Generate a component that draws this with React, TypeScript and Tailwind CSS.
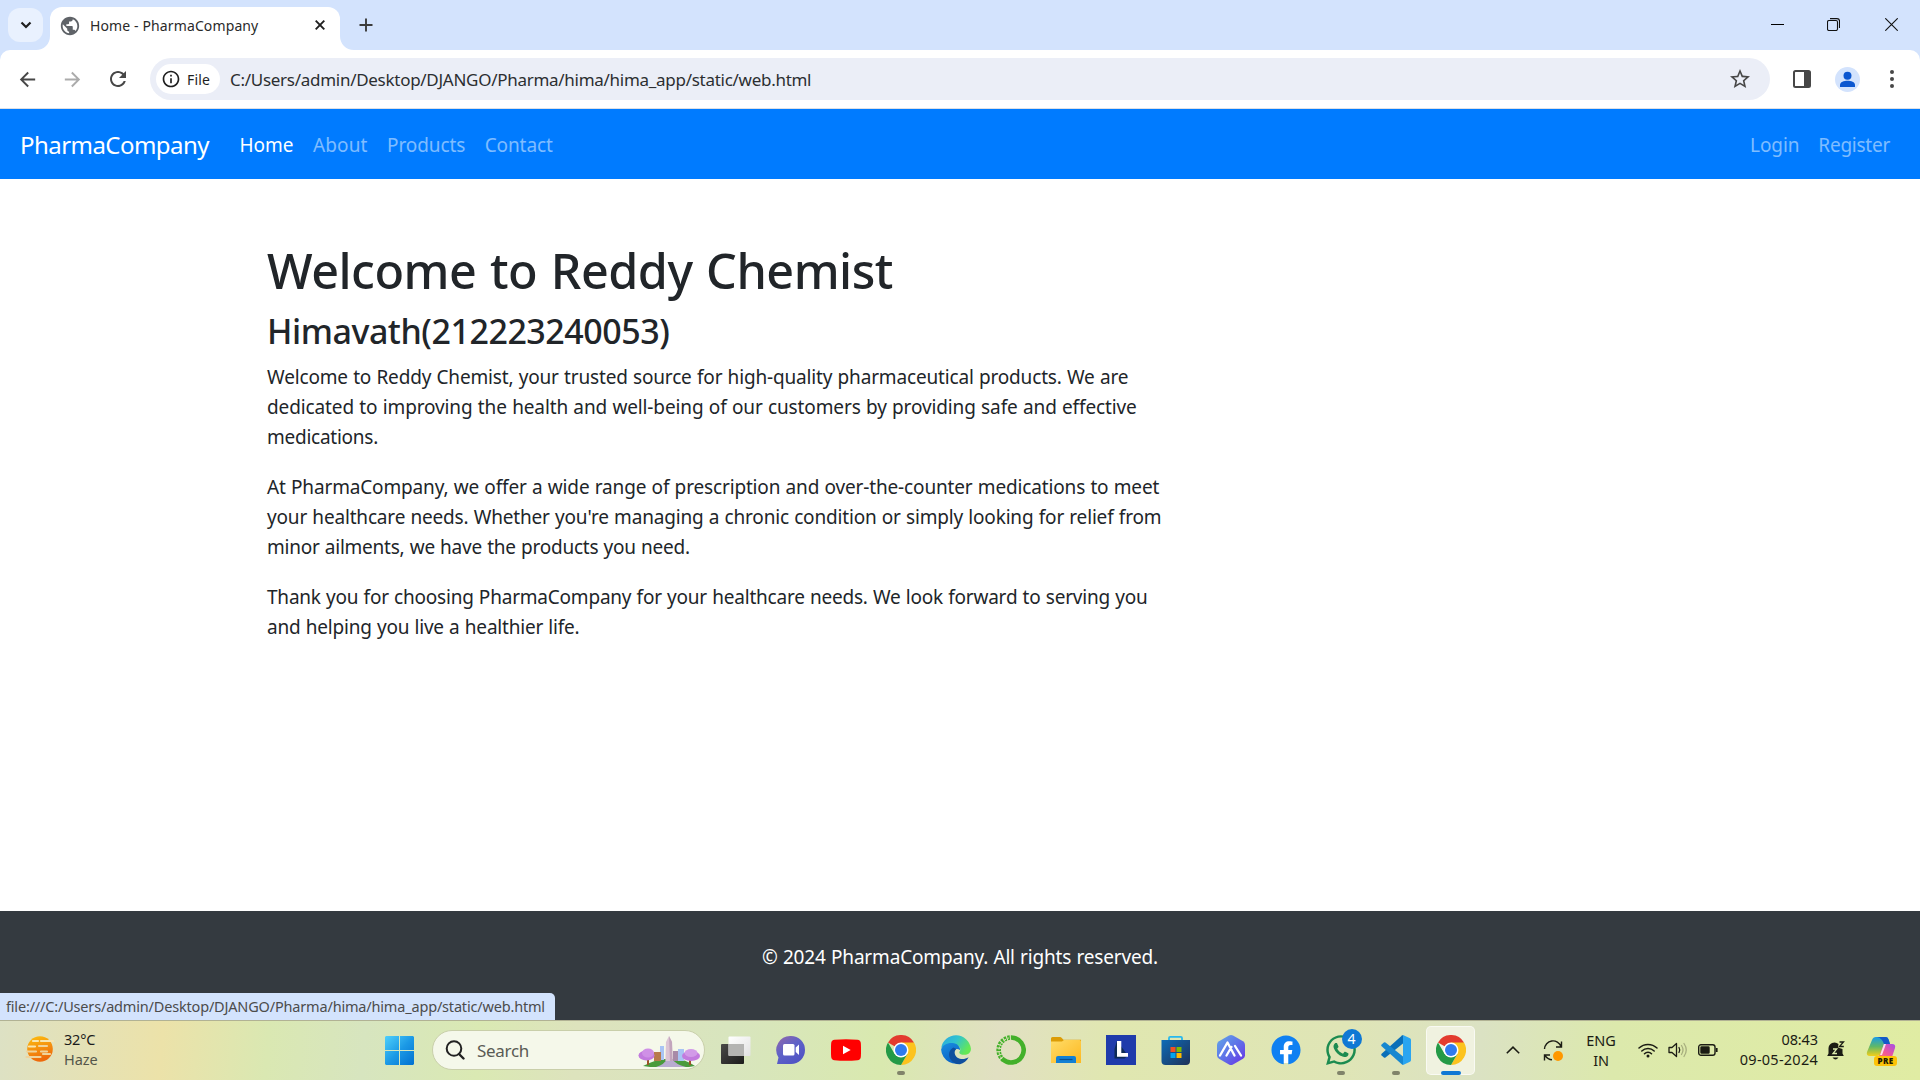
import React from 'react';
import { FaFacebook, FaWhatsapp } from 'react-icons/fa';

type IconProps = { d: string; className: string };

function Glyph({ d, className }: IconProps) {
  return (
    <svg viewBox="0 0 24 24" fill="currentColor" className={className}>
      <path d={d} />
    </svg>
  );
}

const GLOBE =
  'M12 2C6.48 2 2 6.48 2 12s4.48 10 10 10 10-4.48 10-10S17.52 2 12 2zm-1 17.93c-3.95-.49-7-3.85-7-7.93 0-.62.08-1.21.21-1.79L9 15v1c0 1.1.9 2 2 2v1.93zm6.9-2.54c-.26-.81-1-1.39-1.9-1.39h-1v-3c0-.55-.45-1-1-1H8v-2h2c.55 0 1-.45 1-1V7h2c1.1 0 2-.9 2-2v-.41c2.93 1.19 5 4.06 5 7.41 0 2.08-.8 3.97-2.1 5.39z';
const BACK = 'M20 11H7.83l5.59-5.59L12 4l-8 8 8 8 1.41-1.41L7.83 13H20v-2z';
const FORWARD = 'M12 4l-1.41 1.41L16.17 11H4v2h12.17l-5.58 5.59L12 20l8-8z';
const RELOAD =
  'M17.65 6.35C16.2 4.9 14.21 4 12 4c-4.42 0-7.99 3.58-7.99 8s3.57 8 7.99 8c3.73 0 6.84-2.55 7.73-6h-2.08c-.82 2.33-3.04 4-5.65 4-3.31 0-6-2.69-6-6s2.69-6 6-6c1.66 0 3.14.69 4.22 1.78L13 11h7V4l-2.35 2.35z';
const STAR =
  'M22 9.24l-7.19-.62L12 2 9.19 8.63 2 9.24l5.46 4.73L5.82 21 12 17.27 18.18 21l-1.63-7.03L22 9.24zM12 15.4l-3.76 2.27 1-4.28-3.32-2.88 4.38-.38L12 6.1l1.71 4.04 4.38.38-3.32 2.88 1 4.28L12 15.4z';
const INFO =
  'M11 7h2v2h-2zm0 4h2v6h-2zm1-9C6.48 2 2 6.48 2 12s4.48 10 10 10 10-4.48 10-10S17.52 2 12 2zm0 18c-4.41 0-8-3.59-8-8s3.59-8 8-8 8 3.59 8 8-3.59 8-8 8z';

function TabStrip() {
  return (
    <header className="flex h-[50px] bg-[#d3e3fd] pl-2">
      <button className="mt-2 flex h-[34px] w-[35px] items-center justify-center rounded-xl bg-[#e9f1fe]">
        <svg viewBox="0 0 12 8" className="h-[8px] w-[12px]" fill="none" stroke="#1f1f1f" strokeWidth="2.2">
          <path d="M1.5 1.5L6 6l4.5-4.5" />
        </svg>
      </button>
      <svg viewBox="0 0 14 14" className="-ml-[7px] h-[14px] w-[14px] self-end" fill="#fff">
        <path d="M14 0v14H0C8 14 14 8 14 0z" />
      </svg>
      <div className="mt-[7px] flex h-[43px] w-[290px] items-center rounded-t-xl bg-white pb-[7px] pl-[9px]">
        <Glyph d={GLOBE} className="mt-px h-[22px] w-[22px] text-[#5f6368]" />
        <span className="ml-[9px] pt-px text-[14px] tracking-[0.12px] whitespace-nowrap text-[#2a2a2a]">Home - PharmaCompany</span>
        <svg viewBox="0 0 10 10" className="mr-[15px] ml-auto h-[10px] w-[10px]" stroke="#1f1f1f" strokeWidth="1.9">
          <path d="M.7.7l8.6 8.6M9.3.7L.7 9.3" />
        </svg>
      </div>
      <svg viewBox="0 0 14 14" className="h-[14px] w-[14px] self-end" fill="#fff">
        <path d="M0 0v14h14C6 14 0 8 0 0z" />
      </svg>
      <svg viewBox="0 0 14 14" className="mt-[18px] ml-[5px] h-[14px] w-[14px]" stroke="#3c3c3c" strokeWidth="1.9">
        <path d="M7 .5v13M.5 7h13" />
      </svg>
      <div className="ml-auto flex items-start gap-[43px] pt-[18px] pr-[22px]">
        <svg viewBox="0 0 13 13" className="h-[13px] w-[13px]" stroke="#000" strokeWidth="1">
          <path d="M0 6.5h13" />
        </svg>
        <svg viewBox="0 0 13 13" className="h-[13px] w-[13px]" stroke="#111" strokeWidth="1.1" fill="none">
          <rect x=".5" y="2.5" width="10" height="10" rx="1.5" />
          <path d="M3 .6h7a2.5 2.5 0 012.500 2.500V10" />
        </svg>
        <svg viewBox="0 0 13 13" className="ml-[2px] h-[13px] w-[13px]" stroke="#111" strokeWidth="1.1">
          <path d="M.3.3l12.4 12.4M12.7.3L.3 12.7" />
        </svg>
      </div>
    </header>
  );
}

function Toolbar() {
  return (
    <div className="bg-[#d3e3fd]">
      <div className="flex h-[59px] items-center rounded-t-[10px] border-b border-[#dcdfe6] bg-white pl-[16px]">
        <Glyph d={BACK} className="h-[23px] w-[23px] text-[#474747]" />
        <Glyph d={FORWARD} className="ml-[22px] h-[23px] w-[23px] text-[#ababab]" />
        <Glyph d={RELOAD} className="ml-[22px] h-[24px] w-[24px] text-[#474747]" />
        <div className="ml-[20px] flex h-[42px] w-[1620px] items-center rounded-full bg-[#ebeef7] pl-[6px]">
          <div className="flex h-[30px] w-[64px] items-center rounded-full bg-white pl-[5px] text-[#1f1f1f]">
            <Glyph d={INFO} className="h-[20px] w-[20px]" />
            <span className="ml-[6px] text-[14px] tracking-[0.2px]">File</span>
          </div>
          <span className="ml-[10px] pt-px text-[17px] tracking-[-0.28px] whitespace-nowrap text-[#2c2e31]">
            C:/Users/admin/Desktop/DJANGO/Pharma/hima/hima_app/static/web.html
          </span>
          <Glyph d={STAR} className="mr-[18px] ml-auto h-[24px] w-[24px] text-[#474747]" />
        </div>
        <svg viewBox="0 0 18 18" className="ml-[23px] h-[18px] w-[18px]">
          <rect x="1" y="1" width="16" height="16" rx="1.5" fill="#fff" stroke="#474747" strokeWidth="2" />
          <path d="M11 1h6v16h-6z" fill="#474747" />
        </svg>
        <svg viewBox="0 0 25 25" className="ml-[24px] h-[25px] w-[25px]">
          <circle cx="12.5" cy="12.5" r="12.5" fill="#d3e3fd" />
          <circle cx="12.5" cy="8.700" r="4" fill="#0b57d0" />
          <path d="M5 20v-2c0-3 4-4.300 7.500-4.300S20 15 20 18v2z" fill="#0b57d0" />
        </svg>
        <svg viewBox="0 0 4 18" className="ml-[30px] h-[18px] w-[4px]" fill="#474747">
          <circle cx="2" cy="2" r="2" />
          <circle cx="2" cy="9" r="2" />
          <circle cx="2" cy="16" r="2" />
        </svg>
      </div>
    </div>
  );
}

function SiteNav() {
  return (
    <nav className="flex h-[70px] items-center bg-[#007bff] pt-[2px] pr-[30px] pl-[20px] text-[19px] leading-[30px] text-white/50">
      <a className="w-[219.500px] text-[24px] leading-[38px] tracking-[-0.55px] text-white">PharmaCompany</a>
      <div className="flex gap-[19.500px]">
        <a className="text-white">Home</a>
        <a className="tracking-[0.1px]">About</a>
        <a className="tracking-[-0.1px]">Products</a>
        <a className="tracking-[-0.1px]">Contact</a>
      </div>
      <div className="ml-auto flex gap-[19px]">
        <a className="tracking-[-0.1px]">Login</a>
        <a className="tracking-[-0.25px]">Register</a>
      </div>
    </nav>
  );
}

function Article() {
  return (
    <main className="h-[732px] bg-white pt-[61px] pl-[267px] text-[19px] leading-[30px] whitespace-nowrap text-[#212529] [word-spacing:0.5px]">
      <h1 className="mb-[10px] text-[48.500px] leading-[60px] font-medium tracking-[-0.5px] [word-spacing:1.500px]">Welcome to Reddy Chemist</h1>
      <h2 className="mb-[10px] text-[34px] leading-[42px] font-medium tracking-[-0.46px]">Himavath(212223240053)</h2>
      <p className="mb-5">
        <span className="block tracking-[-0.163px]">Welcome to Reddy Chemist, your trusted source for high-quality pharmaceutical products. We are</span>
        <span className="block tracking-[-0.120px]">dedicated to improving the health and well-being of our customers by providing safe and effective</span>
        <span className="block tracking-[-0.250px]">medications.</span>
      </p>
      <p className="mb-5">
        <span className="block tracking-[-0.150px]">At PharmaCompany, we offer a wide range of prescription and over-the-counter medications to meet</span>
        <span className="block tracking-[-0.175px]">your healthcare needs. Whether you're managing a chronic condition or simply looking for relief from</span>
        <span className="block tracking-[-0.230px]">minor ailments, we have the products you need.</span>
      </p>
      <p>
        <span className="block tracking-[-0.210px]">Thank you for choosing PharmaCompany for your healthcare needs. We look forward to serving you</span>
        <span className="block tracking-[-0.200px]">and helping you live a healthier life.</span>
      </p>
    </main>
  );
}

function Footer() {
  return (
    <footer className="relative h-[109px] bg-[#343a40] pt-[31px] text-center text-[19px] leading-[30px] tracking-[-0.17px] text-white [word-spacing:0.5px]">
      © 2024 PharmaCompany. All rights reserved.
      <div className="absolute bottom-0 left-0 h-[27px] w-[555px] rounded-tr-[5px] bg-[#d3e3fd] pl-[6px] text-left text-[14.500px] leading-[27px] tracking-[-0.18px] whitespace-nowrap text-[#4c4c4c]">
        file:///C:/Users/admin/Desktop/DJANGO/Pharma/hima/hima_app/static/web.html
      </div>
    </footer>
  );
}

const ICON = 'h-[30px] w-[30px]';

function Chrome() {
  return (
    <svg viewBox="0 0 30 30" className={ICON}>
      <path d="M15 15L2 7.500A15 15 0 0128 7.500z" fill="#e33b2e" />
      <path d="M15 7.500h13A15 15 0 0115 30l6.500-11.200z" fill="#fcc31e" />
      <path d="M2 7.500A15 15 0 0015 30l6.500-11.300L15 22 8.500 18.700z" fill="#249a47" />
      <circle cx="15" cy="15" r="7.500" fill="#fff" />
      <circle cx="15" cy="15" r="6" fill="#2f7bee" />
    </svg>
  );
}

function TaskView() {
  return (
    <svg viewBox="0 0 30 30" className={ICON}>
      <defs>
        <linearGradient id="tvDark" x1="0" y1="0" x2="1" y2="1">
          <stop offset="0" stopColor="#4a4a48" />
          <stop offset="1" stopColor="#1c1c1c" />
        </linearGradient>
        <linearGradient id="tvLight" x1="0" y1="0" x2="1" y2="1">
          <stop offset="0" stopColor="#fff" />
          <stop offset="1" stopColor="#e2e2e2" />
        </linearGradient>
      </defs>
      <rect x="0" y="9" width="23" height="20" rx="1" fill="url(#tvDark)" />
      <rect x="7.500" y="1.500" width="22" height="19.500" rx="1" fill="url(#tvLight)" />
      <path d="M7.500 9H23v12H8.500a1 1 0 01-1-1z" fill="#b4b4b2" />
    </svg>
  );
}

function Meet() {
  return (
    <svg viewBox="0 0 30 30" className={ICON}>
      <defs>
        <linearGradient id="meet" x1="0" y1="0" x2=".7" y2="1">
          <stop offset="0" stopColor="#9468a8" />
          <stop offset=".5" stopColor="#5f62c8" />
          <stop offset="1" stopColor="#4f52c4" />
        </linearGradient>
      </defs>
      <path d="M15 1a14 14 0 010 28H1l1.500-6.500A14 14 0 0115 1z" fill="url(#meet)" />
      <rect x="7" y="9" width="11.500" height="11.500" rx="1.500" fill="#fff" />
      <path d="M19.700 12.500L23 9.500v10.500l-3.300-3z" fill="#fff" />
    </svg>
  );
}

function YouTube() {
  return (
    <svg viewBox="0 0 30 30" className={ICON}>
      <path d="M3.500 4.700Q15 3.700 26.500 4.700q3 .3 3.300 3.300.5 7 0 14-.3 3-3.300 3.300-11.500 1-23 0Q.5 25 .2 22q-.5-7 0-14 .3-3 3.300-3.300z" fill="#f00" />
      <path d="M12 10.700l7.700 4.300-7.700 4.300z" fill="#fff" />
    </svg>
  );
}

function Edge() {
  return (
    <svg viewBox="0 0 30 30" className={ICON}>
      <defs>
        <linearGradient id="edgeTop" x1="0" y1="0" x2="1" y2=".5">
          <stop offset="0" stopColor="#2aa5e0" />
          <stop offset=".5" stopColor="#30c3d0" />
          <stop offset="1" stopColor="#65e855" />
        </linearGradient>
        <linearGradient id="edgeLeft" x1="0" y1="0" x2=".5" y2="1">
          <stop offset="0" stopColor="#1a8ee0" />
          <stop offset="1" stopColor="#0a62c4" />
        </linearGradient>
      </defs>
      <path d="M.2 13A15 15 0 0129.900 13.500c.3 4.500-3 6.300-6.500 6.300-3.900 0-5.900-1.500-4.800-3.300 2-3.500-.6-6.700-5.600-6.700C6 9.800 1.500 12 .2 13z" fill="url(#edgeTop)" />
      <path d="M.1 14.500C1.500 10 6 7.700 11.500 8c5 .3 8 4 7.500 7-4-3-8 1-7 5 1 5.500 6 8 11 6.500A15 15 0 01.1 14.500z" fill="url(#edgeLeft)" />
      <path d="M12.500 12.500c-4.500 2-6 8-2.500 12.500 2 2.600 5 4.500 9 4.300 3.500-1 7-3.500 8.600-7-5.500 3.500-12.600 1.700-13.800-3.500-.4-2 .2-3.600 1.500-4.700z" fill="#0f4f9e" />
    </svg>
  );
}

function Anaconda() {
  return (
    <svg viewBox="0 0 30 30" className={ICON} fill="none" stroke="#43b02a">
      <path d="M15 2.500a12.500 12.500 0 11-8 22" strokeWidth="4.600" />
      <path d="M7.500 24.900A12.500 12.500 0 0115 2.500" strokeWidth="4.600" strokeDasharray="2.300 1.100" />
      <path d="M6 24A13 13 0 0113 3" strokeWidth="1" stroke="#dde6b8" strokeDasharray="3 2" />
    </svg>
  );
}

function Folder() {
  return (
    <svg viewBox="0 0 30 30" className={ICON}>
      <defs>
        <linearGradient id="folder" x1="0" y1="0" x2="1" y2="1">
          <stop offset="0" stopColor="#ffdc68" />
          <stop offset="1" stopColor="#fdb820" />
        </linearGradient>
      </defs>
      <path d="M0 3.500Q0 2 1.500 2H9q1 0 2 1.200l1.500 1.500H30V12H0z" fill="#dc9c06" />
      <path d="M0 6.500h11l2-1.500h15.500Q30 5 30 6.500V28H0z" fill="url(#folder)" />
      <path d="M5 28v-5q0-2 2-2h16q2 0 2 2v5z" fill="#1280d4" />
      <path d="M8.500 24.500h13" stroke="#0a4f90" strokeWidth="1.200" />
    </svg>
  );
}

function LTile() {
  return (
    <svg viewBox="0 0 30 30" className={ICON}>
      <path d="M0 0h30v30H0z" fill="#1f3bab" />
      <path d="M11 6l-2.500 8v9.500h10l3.500-3z" fill="#0d2a55" />
      <path d="M11 6h4.300v12H22v3.800H11z" fill="#fff" />
    </svg>
  );
}

function Store() {
  return (
    <svg viewBox="0 0 30 30" className={ICON}>
      <defs>
        <linearGradient id="store" x1="0" y1="0" x2="1" y2="1">
          <stop offset="0" stopColor="#0d6cb8" />
          <stop offset="1" stopColor="#1f3158" />
        </linearGradient>
      </defs>
      <path d="M8 7V3q0-1.200 1.200-1.200h10.600Q21 1.800 21 3v4" fill="none" stroke="#28b8ee" strokeWidth="1.800" />
      <path d="M.5 5h28.500v21q0 4-4 4h-20.500q-4 0-4-4z" fill="url(#store)" />
      <path d="M9.500 12h5v5h-5z" fill="#f25022" />
      <path d="M15.500 12h5v5h-5z" fill="#7fba00" />
      <path d="M9.500 18h5v5h-5z" fill="#00a4ef" />
      <path d="M15.500 18h5v5h-5z" fill="#ffb900" />
    </svg>
  );
}

function HexApp() {
  return (
    <svg viewBox="0 0 30 30" className={ICON}>
      <defs>
        <linearGradient id="hex" x1="0" y1="0" x2="1" y2="1">
          <stop offset="0" stopColor="#62a8e8" />
          <stop offset=".5" stopColor="#5f72e8" />
          <stop offset="1" stopColor="#6a2fe6" />
        </linearGradient>
      </defs>
      <path d="M13 .6q2-1 4 0l10 5.700q2 1.200 2 3.400v10.600q0 2.200-2 3.400l-10 5.700q-2 1-4 0L3 23.700q-2-1.200-2-3.400V9.700q0-2.200 2-3.400z" fill="url(#hex)" />
      <path d="M4 20.500L11.500 7.500 18.500 20.500M10.500 20.500L15.500 12M19 11l6 9.500" fill="none" stroke="#fff" strokeWidth="2.300" strokeLinecap="round" strokeLinejoin="round" />
    </svg>
  );
}

function Facebook() {
  return (
    <div className="rounded-full bg-[radial-gradient(circle,white_60%,transparent_61%)]">
      <FaFacebook className="h-[30px] w-[30px] text-[#0f80f2]" />
    </div>
  );
}

function WhatsApp() {
  return (
    <div className="relative">
      <FaWhatsapp className="-mt-[1px] h-[34px] w-[34px] text-[#1c8b50]" />
      <span className="absolute -top-[5px] left-[18px] flex h-5 w-5 items-center justify-center rounded-full bg-[#0f78d4] text-[14px] leading-none text-white">
        4
      </span>
    </div>
  );
}

function VSCode() {
  return (
    <svg viewBox="0 0 30 30" className={ICON}>
      <path d="M22 0v8.500L4.500 22.500q-.8.600-1.600 0L.6 20.400q-.8-.8 0-1.600L21 .4z" fill="#0a6fb8" />
      <path d="M22 30v-8.500L4.500 7.500q-.8-.6-1.600 0L.6 9.600q-.8.800 0 1.600L21 29.600z" fill="#1687d0" />
      <path d="M22 0l7 3.300q1 .5 1 1.700v20q0 1.200-1 1.700L22 30z" fill="#2aa5f0" />
    </svg>
  );
}

const APPS: { icon: React.ReactNode; mark?: 'open' | 'active' }[] = [
  { icon: <TaskView /> },
  { icon: <Meet /> },
  { icon: <YouTube /> },
  { icon: <Chrome />, mark: 'open' },
  { icon: <Edge /> },
  { icon: <Anaconda /> },
  { icon: <Folder /> },
  { icon: <LTile /> },
  { icon: <Store /> },
  { icon: <HexApp /> },
  { icon: <Facebook /> },
  { icon: <WhatsApp />, mark: 'open' },
  { icon: <VSCode />, mark: 'open' },
  { icon: <Chrome />, mark: 'active' },
];

function SearchArt() {
  return (
    <svg viewBox="0 0 62 33" className="h-[33px] w-[62px]">
      <path d="M5 31q14-7 22-7h10q10 0 20 7l-6 1H12z" fill="#4a9a3c" />
      <path d="M18 32q9-3 11-8h5q3 5 14 8z" fill="#b9acd0" />
      <path d="M22 11h4v14h-4zM40 14h6v12h-6z" fill="#a9c4f4" />
      <path d="M16 17h7v9h-7z" fill="#b87a4c" />
      <path d="M35 16h5v10h-5z" fill="#a88aa8" />
      <path d="M28 7l3-6 3 6 .6 19h-7.200z" fill="#dcc4d4" />
      <path d="M31 1l3 6 .6 19H32z" fill="#c3a5bd" />
      <path d="M9 22h2v8H9zM51 22h2v8h-2z" fill="#9a5428" />
      <ellipse cx="8.500" cy="20.500" rx="8" ry="5" fill="#c27ade" />
      <ellipse cx="10" cy="18" rx="6" ry="4.500" fill="#cf90e6" />
      <ellipse cx="53" cy="21" rx="9" ry="5" fill="#c27ade" />
      <ellipse cx="53" cy="18" rx="6.500" ry="4" fill="#d29ae8" />
    </svg>
  );
}

function Weather() {
  return (
    <div className="flex w-[357px] items-center pl-[25px]">
      <svg viewBox="0 0 30 30" className="-mt-[3px] h-[30px] w-[30px]">
        <defs>
          <linearGradient id="sun" x1="0" y1="0" x2=".3" y2="1">
            <stop offset="0" stopColor="#fdc010" />
            <stop offset="1" stopColor="#ee6a0c" />
          </linearGradient>
        </defs>
        <circle cx="15" cy="15" r="12.800" fill="url(#sun)" />
        <g strokeLinecap="round" strokeWidth="2.200">
          <path d="M8 7h5M16 7h12M4 12.500h6" stroke="#f8e6b0" />
          <path d="M14 12h8M2 17.500h9M16 17.500h6M1.500 23h14M18 20h7" stroke="#efd39c" />
        </g>
      </svg>
      <div className="-mt-[4px] ml-[9px] text-[14.500px] leading-[20px] text-[#1b1b1b]">
        <div className="tracking-[-0.2px]">32°C</div>
        <div className="tracking-[-0.1px] text-[#54564a]">Haze</div>
      </div>
    </div>
  );
}

function Tray() {
  return (
    <div className="flex flex-1 items-center text-[14.500px] leading-[20px] text-[#1b1c14]">
      <svg viewBox="0 0 14 8" className="ml-[28px] h-[8px] w-[14px] -translate-y-px" fill="none" stroke="currentColor" strokeWidth="1.600">
        <path d="M.8 7.200L7 1.200l6.200 6" />
      </svg>
      <svg viewBox="0 0 22 22" className="ml-[22px] h-[22px] w-[22px]" fill="none" stroke="currentColor" strokeWidth="1.400">
        <path d="M2.500 9A8.500 8.500 0 0119 6.500M19.500 1.500v5.500h-5.500" />
        <path d="M2.500 20.500v-5.500H8M3 15.500q3 4 7 4.300" />
        <circle cx="16" cy="16" r="5" fill="#ff9800" stroke="none" />
      </svg>
      <div className="-mt-[2px] ml-[22px] w-[30px] text-center whitespace-nowrap">
        <div className="tracking-[-0.1px]">ENG</div>
        <div className="tracking-[-0.3px]">IN</div>
      </div>
      <svg viewBox="0 0 20 16" className="ml-[22px] h-[16px] w-[20px] -translate-y-px" fill="none" stroke="currentColor" strokeWidth="1.500" strokeLinecap="round">
        <path d="M1 6a13 13 0 0118 0M3.800 9a9 9 0 0112.400 0M6.500 11.800a5 5 0 017 0" />
        <circle cx="10" cy="14" r="1.500" fill="currentColor" stroke="none" />
      </svg>
      <svg viewBox="0 0 20 16" className="ml-[10px] h-[16px] w-[20px] -translate-y-px" fill="none" stroke="currentColor" strokeWidth="1.300" strokeLinecap="round" strokeLinejoin="round">
        <path d="M1 5.500v5h3l4.500 4v-13l-4.500 4z" />
        <path d="M11 5.500q1.500 2.500 0 5" />
        <path d="M13.500 3.500q3 4.500 0 9M16 1.500q4.500 6.500 0 13" stroke="#a7ae7e" />
      </svg>
      <svg viewBox="0 0 20 12" className="ml-[10px] h-[12px] w-[20px] -translate-y-px" fill="none" stroke="currentColor" strokeWidth="1.400">
        <rect x=".7" y=".7" width="16.300" height="10.600" rx="2.300" />
        <rect x="3" y="3" width="8" height="6" rx=".5" fill="currentColor" />
        <path d="M18.700 4v4" strokeWidth="1.800" />
      </svg>
      <div className="-mt-[4px] -mr-px ml-auto text-right whitespace-nowrap">
        <div className="tracking-[-0.1px]">08:43</div>
        <div className="tracking-[0.250px]">09-05-2024</div>
      </div>
      <svg viewBox="0 0 18 20" className="ml-[10px] h-[20px] w-[18px]">
        <path d="M1.500 12.500V7.500A6 6 0 0111.500 3L11 6.500l4.500 1.500v4.500l1.300 2.500H.2zM5.500 16.500h6q-3 4-6 0z" fill="#1b1c14" />
        <path d="M6 8h3.700l-3.700 4.500h4" fill="none" stroke="#dcebab" strokeWidth="1.300" />
        <path d="M12.500 1h4l-4 4.500h4.300" fill="none" stroke="#1b1c14" strokeWidth="1.300" />
      </svg>
      <div className="relative mr-[23px] ml-[21px] h-[30px] w-[31px]">
        <svg viewBox="0 0 31 30" className="h-[30px] w-[31px]">
          <defs>
            <linearGradient id="copA" x1="0" y1="0" x2="0" y2="1">
              <stop offset="0" stopColor="#189be8" />
              <stop offset=".5" stopColor="#5fb868" />
              <stop offset="1" stopColor="#f4cf18" />
            </linearGradient>
            <linearGradient id="copB" x1="1" y1="0" x2="0" y2="1">
              <stop offset="0" stopColor="#a44ee8" />
              <stop offset=".5" stopColor="#f0569a" />
              <stop offset="1" stopColor="#fb8a52" />
            </linearGradient>
          </defs>
          <path d="M10 1h10q2 0 2.800 3L24 8h-6l-3 9q-1 3-4 3H4q-4 0-3-4L6 4q1-3 4-3z" fill="url(#copA)" />
          <path d="M11 1h9q2 0 2.800 3L24 8h-6q-2-6-7-7z" fill="#1459c8" />
          <path d="M18 8h8q4 0 3 4l-3 9q-1 3-4 3h-9q-3 0-3-3 3 0 4-3z" fill="url(#copB)" />
          <path d="M18 8h2l-4 11H14z" fill="#fff" fillOpacity=".8" />
        </svg>
        <span className="absolute right-0 bottom-0 flex h-[10px] w-[23px] items-center justify-center rounded-[3px] bg-[#fdc307] text-[8px] leading-none font-black tracking-[0.4px] text-[#201a00]">
          PRE
        </span>
      </div>
    </div>
  );
}

function Taskbar() {
  return (
    <div className="flex h-[60px] items-stretch border-t border-[#b1b294] bg-[linear-gradient(95deg,#dde1c4_0%,#ece2a9_8.500%,#dae8b2_14%,#d7e5bf_19%,#dae9b3_25%,#dde3bd_30%,#d8e5be_38%,#d9e9af_46%,#e1e0c2_52%,#e0e7b0_58%,#dfe5b6_70%,#dbe2c3_77%,#dce9ac_84%,#e0eca3_100%)]">
      <Weather />
      <div className="flex w-[75px] items-center pl-[28px]">
        <svg viewBox="0 0 29 29" className="h-[29px] w-[29px]">
          <defs>
            <linearGradient id="win" gradientUnits="userSpaceOnUse" x1="0" y1="0" x2="29" y2="29">
              <stop offset="0" stopColor="#4fd0fb" />
              <stop offset=".5" stopColor="#1c9ae6" />
              <stop offset="1" stopColor="#0070d0" />
            </linearGradient>
          </defs>
          <path d="M1 0h13v14H0V1zM15 0h13l1 1v13H15zM0 15h14v14H1l-1-1zM15 15h14v13l-1 1H15z" fill="url(#win)" />
        </svg>
      </div>
      <div className="mt-[9px] flex h-[40px] w-[273px] items-center rounded-full border border-[#c9cfaa] bg-[#f5f8ea] pr-[4px] pl-[12px]">
        <svg viewBox="0 0 20 20" className="h-[20px] w-[20px]" fill="none" stroke="#222" strokeWidth="2">
          <circle cx="9" cy="8.500" r="7.300" />
          <path d="M14 14l4.500 4.500" strokeWidth="2.400" strokeLinecap="round" />
        </svg>
        <span className="ml-[12px] pt-px text-[17px] tracking-[-0.300px] text-[#5a5b54]">Search</span>
        <div className="ml-auto pt-[2px]">
          <SearchArt />
        </div>
      </div>
      <div className="ml-[3px] flex">
        {APPS.map((app, i) => (
          <div key={i} className="flex w-[55px] justify-center pt-[5px]">
            <div
              className={
                app.mark === 'active'
                  ? 'relative flex h-[49px] w-[49px] items-center justify-center rounded-[5px] border border-white/60 bg-[#f0f2e0] pb-px'
                  : 'relative flex h-[49px] w-[49px] items-center justify-center pb-px'
              }
            >
              {app.icon}
              {app.mark === 'open' && <span className="absolute bottom-0 left-[21px] h-[4px] w-[8px] rounded-full bg-[#80836a]" />}
              {app.mark === 'active' && <span className="absolute -bottom-px left-[14px] h-[4px] w-[20px] rounded-full bg-[#0f78d4]" />}
            </div>
          </div>
        ))}
      </div>
      <Tray />
    </div>
  );
}

export default function App() {
  return (
    <div className="h-[1080px] w-[1920px] overflow-hidden bg-white font-['Noto_Sans','Open_Sans',sans-serif]">
      <TabStrip />
      <Toolbar />
      <SiteNav />
      <Article />
      <Footer />
      <Taskbar />
    </div>
  );
}
